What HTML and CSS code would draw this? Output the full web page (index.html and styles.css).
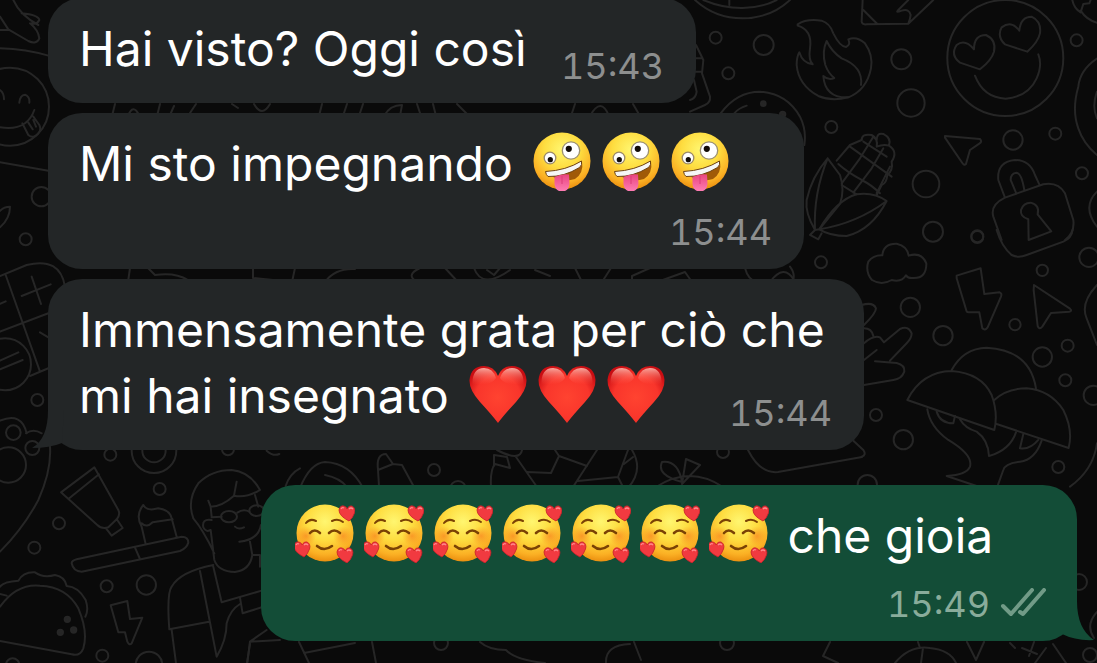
FILE: index.html
```html
<!DOCTYPE html>
<html lang="it">
<head>
<meta charset="utf-8">
<meta name="viewport" content="width=device-width, initial-scale=1">
<title>Chat</title>
<link rel="stylesheet" href="styles.css">
</head>
<body>
<svg class="wallpaper" viewBox="0 0 1097 663" preserveAspectRatio="xMinYMin slice" aria-hidden="true">
  <g transform="translate(690 0) scale(.3333)">
    <path d="M15 0Q75 55 158 55T300 0M40 0Q100 25 158 24T260 0M118 0V15"/>
    <circle cx="77" cy="113" r="18"/><circle cx="221" cy="135" r="30"/><circle cx="115" cy="220" r="18"/><circle cx="634" cy="178" r="30"/><circle cx="663" cy="309" r="41"/><circle cx="424" cy="381" r="18"/>
    <path d="M18 135L40 180L36 220L60 290Q62 308 45 315L0 335M18 175H38M12 215H36M12 240L20 275Q18 295 0 300"/>
    <path d="M92 340Q140 275 210 275Q290 280 330 350Q350 390 343 435M133 340Q145 325 170 317"/>
    <g class="dot"><circle cx="220" cy="311" r="7"/><circle cx="278" cy="343" r="8"/></g>
    <path d="M323 73Q350 55 395 62Q420 70 430 100Q450 140 468 141Q483 135 475 118Q500 108 525 130Q550 165 543 205Q530 270 475 292Q425 305 385 288Q325 255 320 195Q320 170 328 157Q338 190 368 193Q355 180 360 145Q368 90 323 77Z"/>
    <path d="M475 292Q405 295 400 228Q415 242 433 234Q415 220 406 195Q395 155 410 123Q425 155 455 175Q520 200 513 255"/>
    <path d="M518 0L515 65Q517 75 530 73L655 71L730 0M520 30L562 72M655 0L625 30Q615 40 635 32Q658 25 662 45Q660 60 655 71"/>
    <circle cx="946" cy="174" r="174"/>
    <path d="M870 208L810 188Q780 165 800 135Q825 115 852 148Q852 105 888 105Q920 120 912 155Q905 180 870 208Z"/>
    <path d="M1012 155L945 133Q920 110 935 82Q965 60 988 92Q992 50 1025 50Q1055 65 1050 100Q1045 125 1012 155Z"/>
    <path d="M855 227Q880 293 947 296Q1015 290 1040 235Q1058 195 1045 163"/>
    <circle cx="1160" cy="121" r="18"/><circle cx="969" cy="420" r="29"/><circle cx="1096" cy="401" r="18"/><circle cx="708" cy="552" r="40"/><circle cx="1176" cy="520" r="18"/><circle cx="729" cy="695" r="30"/><circle cx="862" cy="709" r="18"/>
    <path d="M1147 0Q1152 25 1172 37L1180 12L1198 10L1202 0M1172 32Q1190 60 1221 68M1221 176Q1170 210 1165 260Q1145 330 1165 385Q1180 430 1221 465M1221 275Q1205 320 1221 355M1221 575Q1175 620 1221 680"/>
    <path d="M765 408L870 417Q878 425 868 431L840 450L828 492Q822 498 815 486L765 413Z"/>
    <path d="M413 475Q365 530 350 600Q345 640 375 690Q370 580 413 475L450 525Q465 570 450 612L388 688"/>
    <path d="M440 482L480 435L515 420M445 492Q470 515 515 540Q545 555 570 580M480 440L605 530M520 425L590 470M455 550L510 475L550 410M490 578L545 505L580 445M560 580L600 500M455 555L500 583"/>
    <path d="M515 420Q515 400 545 405L560 420Q560 397 580 402Q605 415 597 437Q625 455 605 485Q610 510 592 525Q590 550 575 555L560 585M545 405Q565 415 560 440M560 440Q580 432 597 437"/>
    <path d="M388 688Q440 600 500 583Q550 575 590 603Q545 690 470 708Q420 708 388 688M388 688Q500 670 590 603M388 688L375 690L360 705L385 718L395 700"/>
    <path d="M945 593L925 540Q920 485 975 480Q1020 480 1035 525L1048 553M978 578L962 540Q962 520 980 518Q995 520 1003 570M945 593L1060 553Q1105 545 1125 580L1150 660Q1155 700 1125 720M945 593Q900 615 910 650L935 720"/>
    <path d="M1015 658Q990 650 993 630Q1000 608 1022 608Q1050 615 1043 643L1084 694L1016 720Z"/>
  </g>
  <g transform="translate(790 230) scale(.3333)">
    <path d="M620 0Q635 50 665 75Q685 85 710 75L820 35Q845 25 848 0"/>
    <circle cx="562" cy="21" r="18"/><circle cx="93" cy="97" r="18"/><circle cx="897" cy="82" r="29"/><circle cx="757" cy="121" r="17"/><circle cx="361" cy="232" r="29"/><circle cx="459" cy="317" r="29"/><circle cx="675" cy="284" r="17"/><circle cx="833" cy="347" r="18"/><circle cx="757" cy="381" r="29"/><circle cx="826" cy="451" r="18"/><circle cx="910" cy="496" r="29"/><circle cx="258" cy="555" r="18"/><circle cx="340" cy="629" r="29"/><circle cx="805" cy="711" r="18"/><circle cx="232" cy="764" r="29"/>
    <path d="M277 76Q280 40 320 41Q352 48 356 77Q395 65 409 100Q410 145 370 144Q355 146 348 136Q335 158 305 150Q275 168 246 150Q225 125 235 95Q250 75 277 76Z"/>
    <path d="M500 137L572 115L583 192L629 187Q637 190 633 200L593 292Q585 303 577 295L568 247L537 247Q530 248 528 238L500 145Z"/>
    <path d="M732 165L840 236Q848 243 838 245L783 249L757 290Q748 300 743 288L731 180Z"/>
    <path d="M215 225Q250 215 258 235Q258 250 222 285M222 295Q245 295 250 318M222 340Q250 315 270 322L282 337L330 297Q355 285 365 310Q365 325 350 340L300 392M222 390L260 360M255 394L320 399Q345 405 343 425Q335 447 310 450L222 465"/>
    <path d="M485 420Q520 355 590 353Q720 360 738 475M352 510Q395 425 485 423Q575 430 605 495Q625 550 613 600L352 510ZM613 510Q650 475 710 475Q780 480 820 540Q850 600 836 654L620 582"/>
    <path d="M412 538Q420 590 475 630Q550 675 540 710Q530 735 470 738L560 768M440 545Q450 580 490 580L495 558M510 568Q525 595 560 605Q595 630 597 678Q660 660 678 607M690 655Q720 660 745 630M690 655L700 612M755 632Q735 690 690 695Q645 700 640 720L622 770M921 165Q870 220 890 265L921 345M921 640Q910 720 840 770M0 110Q15 130 10 148M190 632L220 660Q230 675 215 680"/>
  </g>
  <g transform="translate(0 440) scale(.3333)">
    <circle cx="25" cy="75" r="53"/><circle cx="97" cy="24" r="21"/><circle cx="331" cy="44" r="18"/><circle cx="462" cy="32" r="67"/><circle cx="462" cy="32" r="35"/><circle cx="479" cy="147" r="18"/><circle cx="177" cy="250" r="18"/><circle cx="103" cy="323" r="18"/><circle cx="320" cy="439" r="18"/><circle cx="439" cy="435" r="29"/><circle cx="307" cy="647" r="18"/><circle cx="447" cy="675" r="40"/><circle cx="38" cy="675" r="20"/><circle cx="684" cy="28" r="18"/>
    <path d="M150 20Q155 90 115 180Q70 265 0 335M183 157L283 82L355 210Q362 225 350 238L325 262Q305 268 292 255ZM205 177L297 103M318 265L335 287L368 264L350 237M800 32Q820 50 838 42"/>
    <path d="M230 358L545 290Q565 290 565 308Q560 325 540 333L245 395Q220 395 215 370Q215 362 230 358ZM405 323L420 357M437 312L425 260Q405 225 430 195Q440 215 475 205Q510 210 515 235L530 290M425 250Q440 265 458 247L518 238"/>
    <path d="M0 440Q10 425 55 422Q70 395 105 397Q130 415 165 405Q195 410 200 438Q235 440 257 480Q267 510 256 530M0 500Q50 430 120 437Q200 440 235 505Q265 575 250 625Q240 650 215 643L0 603M0 462L20 467"/>
    <g class="dot"><circle cx="202" cy="538" r="8"/><circle cx="181" cy="577" r="8"/><circle cx="221" cy="570" r="8"/></g>
    <path d="M332 496L382 483L390 537L427 533L395 610Q388 618 382 605L375 577L355 577Z"/>
    <path d="M643 340Q610 270 580 235Q560 180 595 130Q635 90 695 90Q750 95 780 150Q740 175 702 167Q665 200 632 200L625 182M702 167L710 125M765 165L775 200M632 200L635 230M635 240Q605 235 610 262Q618 278 632 270L643 360Q655 395 705 396Q750 390 757 345L750 305M718 305Q775 300 783 255M705 260Q715 270 732 262M712 218Q730 205 748 215M635 232L665 230"/>
    <ellipse cx="687" cy="230" rx="24" ry="17"/><ellipse cx="770" cy="212" rx="22" ry="16"/>
    <path d="M640 375Q540 395 515 440Q500 460 508 568L627 545M600 393L650 650Q680 600 680 550Q690 510 720 492M640 380L665 487L785 452M515 570L528 669M720 473L728 520L785 502M760 345H780V380M800 570L750 605L840 600M750 605L742 669M857 138Q870 100 900 85"/>
  </g>
  <g transform="scale(.3333)">
    <path d="M0 50L25 88L85 123Q110 135 118 115Q115 90 90 70M40 0Q60 45 115 75M65 40Q115 45 118 60Q110 75 95 70M0 90H25M0 145Q80 148 145 167M0 487L145 512M0 682Q30 655 30 620Q10 620 0 633"/>
    <circle cx="30" cy="320" r="117"/><circle cx="124" cy="590" r="29"/><circle cx="77" cy="718" r="18"/><circle cx="112" cy="1200" r="18"/><circle cx="40" cy="1298" r="22"/><circle cx="15" cy="1093" r="78"/>
    <path d="M0 270Q12 278 12 298M58 308Q60 285 75 284Q90 290 88 308M0 382Q80 395 103 330M67 370L85 405Q100 418 115 400Q125 390 118 375L100 350M85 368L98 388M100 360L108 380"/>
    <path d="M0 828L80 795Q180 770 195 860M17 825L120 1115M0 995L145 940M95 830L123 912M65 888L152 853M0 912L17 904M120 997L145 1012M90 1128L145 1105M0 1082L55 1057M0 1108L68 1080M0 1262Q65 1235 80 1300M78 1300Q100 1285 125 1300"/>
  </g>
  <path d="M300 488Q310 463 325 462Q350 463 363 488M325 475Q340 478 347 487M378 470Q376 454 386 454L393 464L402 465L414 487M379 486L378 470L393 464"/>
  <circle cx="434" cy="470" r="6"/><circle cx="458" cy="489" r="8"/><circle cx="723" cy="452" r="6"/>
  <path d="M491 487Q490 470 495 464L510 468L507 457L494 455V465M497 450Q520 462 522 450M516 457L537 487M527 472L551 473L559 456L587 466M555 450L559 456M597 450L573 487M578 481L618 477L623 487M628 450L618 477M624 464L633 457M632 450Q644 470 628 488M656 487Q690 465 723 487M682 484L686 459L700 465ZM682 482Q656 475 662 462Q678 460 682 482M748 450Q760 474 778 472L862 457"/>
  <path d="M115 104L112 116M128 116Q133 103 139 115M160 104L157 116M170 115L174 106M196 104L188 116M232 104L238 108M254 104Q262 118 270 104M322 104L319 116M347 104L343 116M363 104L359 116M384 116Q390 105 402 105L400 116M417 104L421 116M433 104L436 116M457 104L469 116M575 104L571 116M590 116Q601 96 609 116M633 104L640 116"/>
  <path d="M130 268L128 282M148 268L155 275Q175 272 188 280M253 268V278L273 280M295 268L292 282M325 282Q335 268 355 269M420 268Q405 275 417 282M445 268L458 282M474 268Q482 290 510 270M487 270L494 275L500 268M535 270L550 276M575 268L582 282M611 268L602 282M650 268L632 276V282M660 281L685 272L692 282M745 268Q748 280 757 282M770 282Q784 263 794 280"/>
  <path d="M250 644L247 663M299 642L309 663M304 653L355 643M372 642L376 663M480 642Q489 650 506 650Q515 660 545 663M606 663Q605 645 630 644M634 642L641 660M830 642L823 656L838 663M895 663Q910 645 930 648Q950 650 956 663M923 648L921 663M920 648L918 642M967 642L976 660L984 642M1010 643L1015 648M1022 648L1037 654M1034 642L1029 656M1046 648L1035 663M1053 644L1066 663M1097 612Q1085 625 1094 638"/>
  <circle cx="441" cy="643" r="7"/><circle cx="727" cy="643" r="7"/><circle cx="1079" cy="582" r="8"/><circle cx="1090" cy="655" r="7"/>
</svg>

<svg class="defs" aria-hidden="true">
  <defs>
    <radialGradient id="skin" cx=".5" cy=".3" r=".72">
      <stop offset="0" stop-color="#fff670"/><stop offset=".45" stop-color="#fedd40"/><stop offset=".8" stop-color="#fbb024"/><stop offset="1" stop-color="#e88a0c"/>
    </radialGradient>
    <radialGradient id="blush"><stop offset="0" stop-color="#f8761c" stop-opacity=".6"/><stop offset="1" stop-color="#f8861c" stop-opacity="0"/></radialGradient>
    <radialGradient id="red" cx=".5" cy=".55" r=".6">
      <stop offset="0" stop-color="#ff4330"/><stop offset=".65" stop-color="#f9352b"/><stop offset="1" stop-color="#c90d12"/>
    </radialGradient>
    <linearGradient id="shine" x1="0" y1="0" x2="0" y2="1"><stop offset="0" stop-color="#ffc4b8" stop-opacity=".85"/><stop offset="1" stop-color="#ff5040" stop-opacity="0"/></linearGradient>
    <linearGradient id="tongue" x1="0" y1="0" x2="0" y2="1"><stop offset="0" stop-color="#e8447f"/><stop offset="1" stop-color="#ff7eb4"/></linearGradient>
    <symbol id="zany" viewBox="0 0 60 60">
      <circle cx="30" cy="30" r="28.500" fill="url(#skin)"/>
      <circle cx="18" cy="27" r="5.800" fill="#fff" stroke="#9c8a6a" stroke-width="1.300"/>
      <circle cx="39" cy="19.500" r="8.700" fill="#fff" stroke="#9c9070" stroke-width="1.300"/>
      <circle cx="18.300" cy="28.700" r="2.600" fill="#120c08"/><circle cx="36.800" cy="17.800" r="3.100" fill="#120c08"/>
      <path d="M14 41Q34 40 50 30Q52 42 43 48Q28 53 14 41Z" fill="#a05a08"/>
      <path d="M13.500 40.500Q34 39.500 49.500 30Q50.500 34 47.500 36.500Q32 46 16 45.500Q14 44 13.500 40.500Z" fill="#f6f6f6" stroke="#6e4210"/>
      <path d="M22.500 46Q29 42.500 37 43.500L37.500 53Q36.500 60.500 30 60.500Q23.500 60.500 22.500 53Z" fill="url(#tongue)"/>
      <path d="M30 45V53" stroke="#db3c78" fill="none"/>
    </symbol>
    <symbol id="heart" viewBox="0 0 60 60">
      <path d="M30 60Q24 52 12 39Q1 27 1.500 17Q3 3 16 3Q26 3 30 13Q34 3 44 3Q57 3 58.500 17Q59 27 48 39Q36 52 30 60Z" fill="url(#red)"/>
      <path d="M4.500 22Q4 5 16 5Q25 5 28 15Q24 21 16 21Q9 21 4.500 22ZM55.500 22Q56 5 44 5Q35 5 32 15Q36 21 44 21Q51 21 55.500 22Z" fill="url(#shine)"/>
    </symbol>
    <symbol id="mini" viewBox="0 0 18 18">
      <path d="M11 17Q1 12 1 6Q2 1 6 2Q9 3 9 5Q11 1 14 2Q18 4 16.500 9Q15 14 11 17Z" fill="#f13a40" stroke="#c5202a" stroke-width=".8"/>
      <path d="M3 5Q4 3 6 4M11 5Q13 3 15 5" fill="none" stroke="#ff8a8c" stroke-width="1.200"/>
    </symbol>
    <symbol id="love" viewBox="0 0 60 60">
      <circle cx="30" cy="30" r="28.500" fill="url(#skin)"/>
      <circle cx="11" cy="33" r="10" fill="url(#blush)"/><circle cx="48" cy="33" r="10" fill="url(#blush)"/>
      <g fill="none" stroke="#7a4205" stroke-linecap="round" stroke-width="2">
        <path d="M11 20Q15 15 21 18M37 18Q43 15 48 19"/>
        <path d="M15 30Q19.500 25 25 30M34 30Q39 25 45 30" stroke-width="2.600"/>
        <path d="M22 43Q29 49 37 43" stroke-width="2.600"/>
      </g>
      <use href="#mini" x="43" y="1" width="18" height="18"/>
      <use href="#mini" x="-2" y="37" width="18" height="18"/>
      <use href="#mini" x="41" y="43" width="18" height="18"/>
    </symbol>
  </defs>
</svg>

<main class="chat">
  <article class="bubble incoming inline short">
    <p class="text">Hai visto? Oggi così</p>
    <time class="time">15:43</time>
  </article>

  <article class="bubble incoming stacked medium">
    <p class="text">Mi sto impegnando <span class="emojis" role="img" aria-label="tre faccine buffe"><svg><use href="#zany"/></svg><svg><use href="#zany"/></svg><svg><use href="#zany"/></svg></span></p>
    <time class="time">15:44</time>
  </article>

  <article class="bubble incoming inline long">
    <p class="text">Immensamente grata per ciò che<br>mi hai insegnato <span class="emojis" role="img" aria-label="tre cuori rossi"><svg><use href="#heart"/></svg><svg><use href="#heart"/></svg><svg><use href="#heart"/></svg></span></p>
    <time class="time overlap">15:44</time>
    <svg class="tail tail-left" viewBox="0 0 32 40" aria-hidden="true"><path d="M16 0Q16 29 0 38Q18 38 30 33L32 0Z"/></svg>
  </article>

  <article class="bubble outgoing stacked long">
    <p class="text"><span class="emojis" role="img" aria-label="sette faccine con cuori"><svg><use href="#love"/></svg><svg><use href="#love"/></svg><svg><use href="#love"/></svg><svg><use href="#love"/></svg><svg><use href="#love"/></svg><svg><use href="#love"/></svg><svg><use href="#love"/></svg></span> che gioia</p>
    <div class="meta">
      <time class="time">15:49</time>
      <svg class="checks" viewBox="0 0 48 32" role="img" aria-label="Consegnato"><path d="M4 18L12 26L33 2M21 24L24 26L45 2"/></svg>
    </div>
    <svg class="tail tail-right" viewBox="0 0 32 40" aria-hidden="true"><path d="M15 0Q15 28 32 39Q14 40 0 33V0Z"/></svg>
  </article>
</main>
</body>
</html>
```
FILE: styles.css
```css
* {
  box-sizing: border-box;
}

body {
  position: relative;
  min-height: 100vh;
  margin: 0;
  overflow: hidden;
  background: #0a0a0a;
  color: #fff;
  font-family: Inter, "Liberation Sans", sans-serif;
}

.wallpaper {
  position: absolute;
  inset: 0;
  z-index: -1;
  width: 100%;
  height: 100%;
  fill: none;
  stroke: #262626;
  stroke-width: 2px;
  stroke-linecap: round;
  stroke-linejoin: round;
}

.wallpaper * {
  vector-effect: non-scaling-stroke;
}

.wallpaper .dot {
  fill: #262626;
}

.defs {
  position: absolute;
  width: 0;
  height: 0;
}

.chat {
  display: flex;
  flex-direction: column;
  gap: 10px;
  padding: 0 20px 20px 48px;
}

.bubble {
  position: relative;
  display: flex;
  max-width: 100%;
  padding: 18px 32px 17px 31px;
  border-radius: 34px;
}

.incoming {
  align-self: flex-start;
  background: #232627;
}

.outgoing {
  align-self: flex-end;
  margin-top: 25px;
  background: #134d37;
}

.inline {
  align-items: flex-end;
  justify-content: space-between;
}

.stacked {
  flex-direction: column;
  gap: 11px;
}

.short {
  width: 648px;
  margin-top: -2px;
}

.medium {
  width: 756px;
}

.long {
  width: 816px;
}

.text {
  margin: 0;
  padding-bottom: 4px;
  font-size: 48px;
  line-height: 66px;
  white-space: nowrap;
}

.emojis {
  display: inline-flex;
  gap: 9px;
  height: 60px;
  margin-top: -6px;
  margin-left: 6px;
  vertical-align: -10px;
}

.outgoing .emojis {
  margin-right: 5px;
  margin-left: 3px;
}

.emojis svg {
  width: 60px;
  height: 60px;
  overflow: visible;
}

.time {
  color: #8d8f8f;
  font-size: 36px;
  font-variant-numeric: tabular-nums;
  line-height: 40px;
}

.stacked > .time {
  align-self: flex-end;
}

.overlap {
  margin-left: -96px;
}

.meta {
  display: flex;
  align-items: center;
  align-self: flex-end;
  gap: 9px;
  margin-right: -2px;
}

.outgoing .time {
  color: #89ac9b;
}

.checks {
  width: 48px;
  height: 32px;
  fill: none;
  stroke: #719b87;
  stroke-width: 4px;
  stroke-linecap: round;
  stroke-linejoin: round;
}

.tail {
  position: absolute;
  bottom: 0;
  width: 32px;
  height: 40px;
}

.tail-left {
  left: -16px;
  fill: #232627;
}

.tail-right {
  right: -17px;
  fill: #134d37;
}
```
